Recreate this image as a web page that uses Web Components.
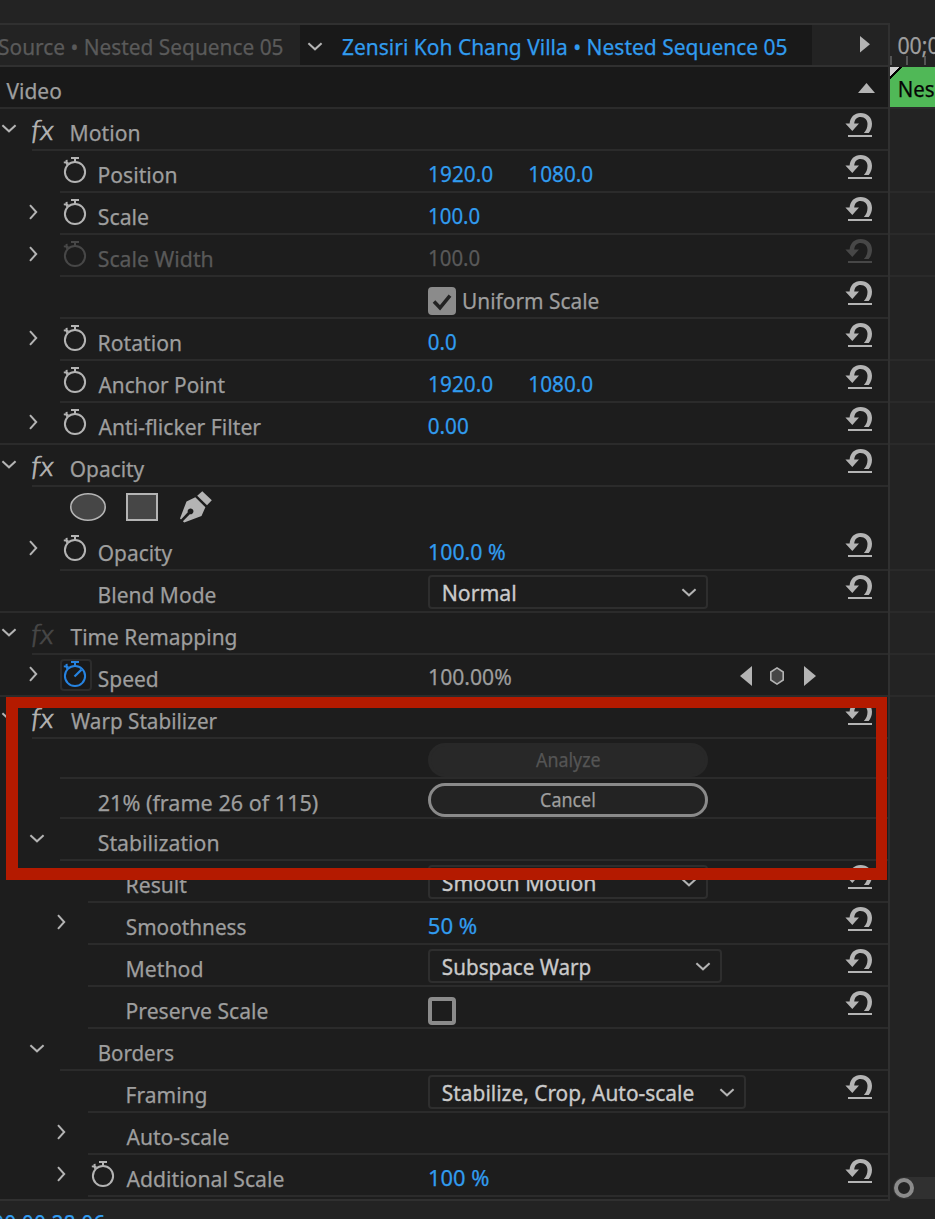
<!DOCTYPE html>
<html lang="en">
<head>
<meta charset="utf-8">
<title>Effect Controls</title>
<style>
html,body{margin:0;height:1219px;background:#232323;overflow:hidden}
body{font:22px/30px "Noto Sans","Open Sans",sans-serif;color:#9e9e9e;-webkit-text-stroke:.25px}
</style>
</head>
<body>
<effect-app></effect-app>
<script>
const define = (name, css, html, init) => {
  const t = document.createElement('template');
  t.innerHTML = `<style>*{box-sizing:border-box}svg{display:block;overflow:visible}${css}</style>${html}`;
  customElements.define(name, class extends HTMLElement {
    connectedCallback() {
      if (this.shadowRoot) return;
      this.attachShadow({ mode: 'open' }).appendChild(t.content.cloneNode(true));
      if (init) init(this, this.shadowRoot);
    }
  });
};

/* Text condensed to a given ink width: "ink" is the drawn width, "dx" its left offset. */
const ctx = document.createElement('canvas').getContext('2d');
define('fit-text', `:host{display:block;white-space:pre;flex:none;line-height:30px}
  span{display:inline-block;transform-origin:0 0}`, `<span><slot></slot></span>`, (el, root) => {
  const s = getComputedStyle(el), span = root.querySelector('span');
  ctx.font = `${s.fontStyle} ${s.fontWeight} ${s.fontSize} ${s.fontFamily}`;
  const m = ctx.measureText(el.textContent);
  const w = parseFloat(el.getAttribute('ink'));
  const k = w / (m.actualBoundingBoxLeft + m.actualBoundingBoxRight);
  const dx = parseFloat(el.getAttribute('dx') || 0) + m.actualBoundingBoxLeft * k;
  el.style.width = w + 'px';
  span.style.transform = `translateX(${dx}px) scaleX(${k})`;
});

const icons = {
  down: [16, 10, '<path d="M1.4 1.2 8 7.3 14.6 1.2" fill="none" stroke="currentColor" stroke-width="2"/>'],
  right: [10, 16, '<path d="M1 1.2 7.2 8 1 14.8" fill="none" stroke="currentColor" stroke-width="2"/>'],
  watch: [26, 28, '<circle cx="13" cy="16" r="10.1" fill="none" stroke="currentColor" stroke-width="2"/><path d="M9 1h8v2h-3v3h-2V3H9z" fill="currentColor"/><path d="M3.600 4 5.6 3.800 5.600 6 7 6.800 4.400 9.200 3.800 7.600 1.800 7.200 1.800 5.400 3.600 5.600z" fill="currentColor"/>'],
  watchon: [26, 28, '<circle cx="13" cy="16" r="10.1" fill="none" stroke="currentColor" stroke-width="2"/><path d="M9 1h8v2h-3v3h-2V3H9z" fill="currentColor"/><path d="M3.600 4 5.6 3.800 5.600 6 7 6.800 4.400 9.200 3.800 7.600 1.800 7.200 1.800 5.400 3.600 5.600z" fill="currentColor"/><path d="M12.5 16.5 19.5 9.6" stroke="currentColor" stroke-width="2.2"/>'],
  reset: [28, 26, '<path d="M4.600 10.400C5.200 4.200 9.300 0 15.600 0 22.200 0 27 4.300 27 10.800c0 3.700-1.200 6.700-3.300 9.200h-4.800c2.300-2.500 3.600-5.400 3.600-9 0-4-2.700-6.900-6.900-6.900-3.800 0-5.900 2.400-6.400 6.300H14L7.300 18 .4 10.400z" fill="currentColor"/><path d="M3 22h24v2H3z" fill="currentColor"/>'],
  play: [12, 20, '<path d="M0 0 12 10 0 20z" fill="currentColor"/>'],
  back: [12, 20, '<path d="M12 0 0 10 12 20z" fill="currentColor"/>'],
  key: [14, 18, '<path d="M7 .9 13.2 5v8L7 17.100.8 13V5z" fill="#464646" stroke="currentColor" stroke-width="1.6"/>'],
  menu: [10, 17, '<path d="M0 0 10 8.300 0 16.600z" fill="currentColor"/>'],
  up: [17, 10, '<path d="M0 10 8.500 0 17 10z" fill="currentColor"/>'],
  ellipse: [36, 28, '<ellipse cx="18" cy="14" rx="17.200" ry="13.200" fill="#464646" stroke="currentColor" stroke-width="1.600"/>'],
  rect: [32, 28, '<path d="M1 1h30v26H1z" fill="#464646" stroke="currentColor" stroke-width="2"/>'],
  pen: [32, 32, '<path d="M22.300.2 31.800 9.300 27 14.200 17.200 4.800z" fill="currentColor"/><path d="M15.300 6.300 25.400 16.200 21.500 25 4.200 31.400 2.900 30.300 9.800 23.200A2.900 2.900 0 1 0 7.800 21.300L1 28.600 0 27.500 6.500 10.400z" fill="currentColor"/>'],
  check: [28, 28, '<path d="M6 14.500 12 20.800 22 8.700" fill="none" stroke="#222" stroke-width="3.600"/>']
};
define('ui-icon', `:host{display:block;flex:none;color:#b4b4b4}`, `<svg></svg>`, (el, root) => {
  const [w, h, body] = icons[el.getAttribute('name')], svg = root.querySelector('svg');
  svg.setAttribute('width', w); svg.setAttribute('height', h); svg.innerHTML = body;
});

define('tick-box', `:host{display:block;flex:none;box-sizing:border-box;width:28px;height:28px;margin-top:10px;border:4px solid #8b8b8b;border-radius:4px}
  :host([checked]){background:#8b8b8b}ui-icon{display:none;margin:-4px}:host([checked]) ui-icon{display:block}`,
  `<ui-icon name="check"></ui-icon>`);

define('drop-down', `:host{display:flex;box-sizing:border-box;justify-content:space-between;height:34px;margin-top:4px;border:2px solid #2e2e2e;border-radius:4px;padding:0 9px 0 12px;color:#cacaca;-webkit-text-stroke:.35px}
  ui-icon{margin-top:11px}`, `<slot></slot><ui-icon name="down"></ui-icon>`);

define('pill-button', `:host{display:flex;box-sizing:border-box;justify-content:center;width:280px;height:34px;margin-top:4px;border:3px solid #8a8a8a;border-radius:17px;font-size:19px;background:#232323;color:#9e9e9e}
  :host([disabled]){background:#282828;border-color:#282828;color:#555}
  div{margin-top:-1px}`, `<div><slot></slot></div>`);

/* One property line: twirl arrow, stopwatch or fx badge, name, value and reset button. */
define('prop-row', `
  :host{display:flex;height:var(--h,42px);width:888px;align-items:flex-start;
    background:linear-gradient(#2b2b2b,#2b2b2b) var(--inset) 100%/100% 2px no-repeat}
  .name{display:flex;width:428px;flex:none;align-items:flex-start}
  .twirl{width:32px;flex:none}.twirl ui-icon{margin-left:1px}
  .badge{width:38px;flex:none}
  .badge.watch ui-icon{margin:5px 0 0 2px}
  .badge.watchon{width:32px;height:32px;margin:4px 6px 0 0;border:2px solid #2c2c2c;border-radius:4px;background:#191919}
  .badge.watchon ui-icon{margin:-1px 0 0 0;color:#2683e0}
  .fx{font:italic 300 27px/30px Lato,"Noto Sans",sans-serif;-webkit-text-stroke:.7px;color:#b4b4b4;margin-top:6px}
  .dim{color:#474747!important}
  .label{margin-top:8px}
  .value{display:flex;width:417px;flex:none;align-items:flex-start;color:#319cef}
  .reset{margin-top:4px}`,
  `<div class="name"><div class="twirl"></div><div class="badge"></div><div class="label"><slot name="label"></slot></div></div>
   <div class="value"><slot></slot></div>`, (el, root) => {
  const a = n => el.getAttribute(n), $ = s => root.querySelector(s), lv = +a('level') || 0;
  el.style.setProperty('--inset', (a('line') ?? 32 + 28 * lv) + 'px');
  if (a('h')) el.style.setProperty('--h', a('h') + 'px');
  $('.name').style.paddingLeft = 28 * lv + 'px';
  const t = a('twirl'), dim = el.hasAttribute('dim');
  if (t) $('.twirl').innerHTML = `<ui-icon name="${t}" style="margin-top:${t === 'down' ? 15 : 11}px"></ui-icon>`;
  const b = a('badge'), bd = $('.badge');
  if (b === 'fx') bd.innerHTML = `<div class="fx${dim ? ' dim' : ''}"><fit-text ink="21.5" dx=".3">fx</fit-text></div>`;
  else if (b) { bd.classList.add(b); bd.innerHTML = `<ui-icon name="${b}"${dim ? ' class="dim"' : ''}></ui-icon>`; }
  if (dim && b !== 'fx') { $('.label').style.color = '#595959'; $('.value').style.color = '#595959'; }
  if (el.hasAttribute('reset')) $('.value').insertAdjacentHTML('afterend', `<ui-icon name="reset" class="reset${dim ? ' dim' : ''}"></ui-icon>`);
});

define('time-ruler', `:host{display:flex;flex-direction:column;width:45px;overflow:hidden;background:#232323}
  .scale{height:42px;font-size:23.500px;padding:5px 0 0 8px;flex:none;background:
    linear-gradient(#555,#555) 0 31px/2px 9px no-repeat,linear-gradient(#555,#555) 16px 31px/2px 9px no-repeat,linear-gradient(#555,#555) 34px 31px/2px 9px no-repeat}
  .clip{height:40px;flex:none;background:linear-gradient(135deg,#d0d0d0 6.500px,#000 6.500px 8.500px,#50b857 8.500px);color:#050505;padding:6px 0 0 9px}
  .lane{border-bottom:2px solid #2a2a2a;flex:none}
  .grow{flex:1}.bar{height:22px;background:#303030;border-radius:11px 0 0 11px;margin:0 0 2px 3px;padding:1px}
  .bar i{display:block;width:20px;height:20px;border:4px solid #8b8b8b;border-radius:50%;background:#232323}`,
  `<div class="scale"><fit-text ink="41" dx=".3">00;0</fit-text></div><div class="clip"><fit-text ink="34.5" dx=".5">Nes</fit-text></div>
   <div class="lanes"></div><div class="grow"></div><div class="bar"><i></i></div>`, (el, root) => {
  root.querySelector('.lanes').innerHTML = [2, 84, 42, 42, 84, 42, 42, 126, 42, 42, 42].map(h => `<div class="lane" style="height:${h}px"></div>`).join('');
});

define('tab-bar', `:host{display:flex;box-sizing:border-box;height:42px;border-bottom:2px solid #303030;background:#232323;width:888px}
  .off{width:300px;color:#5a5a5a;padding-top:6px}
  .on{width:512px;background:#191919;display:flex;color:#319cef;padding:6px 0 0 7px}
  .on ui-icon{margin:11px 19px 0 0}.menu{margin:11px 0 0 48px}`,
  `<div class="off"><fit-text ink="284" dx="-1">Source • Nested Sequence 05</fit-text></div>
   <div class="on"><ui-icon name="down"></ui-icon><fit-text ink="445">Zensiri Koh Chang Villa • Nested Sequence 05</fit-text></div>
   <ui-icon class="menu" name="menu"></ui-icon>`);

define('section-head', `:host{display:flex;box-sizing:border-box;justify-content:space-between;height:42px;border-bottom:2px solid #2b2b2b;background:#191919;padding:8px 13px 0 6px}
  ui-icon{margin-top:8px}`, `<slot></slot><ui-icon name="up"></ui-icon>`);

const L = (dx, ink, s) => `<fit-text slot="label" dx="${dx}" ink="${ink}">${s}</fit-text>`;
const V = (dx, ink, s, st = '') => `<fit-text style="margin-top:7px;${st}" dx="${dx}" ink="${ink}">${s}</fit-text>`;
const D = (w, ink, s, dx = .8) => `<drop-down style="width:${w}px"><fit-text dx="${dx}" ink="${ink - 1}">${s}</fit-text></drop-down>`;
const XY = V(1, 63.7, '1920.0') + V(1.2, 63.5, '1080.0', 'margin-left:36.300px');

define('effect-app', `
  :host{display:flex;flex-direction:column;width:935px;height:1219px;position:relative;background:#232323;overflow:hidden}
  .main{display:flex;margin-top:23px;height:1178px}
  .panel{width:890px;flex:none;border:solid #303030;border-width:2px 2px 2px 0;background:#1d1d1d}
  time-ruler{padding-top:2px;box-sizing:border-box}
  .masks{display:flex;padding:6px 0 0 70px;height:42px}.masks ui-icon+ui-icon{margin-left:20px}.masks ui-icon:last-child{margin:-2px 0 0 22px}
  .keys{display:flex;margin-left:229px;padding-top:11px}.keys ui-icon+ui-icon{margin-left:18px}.keys ui-icon:nth-child(2){margin-top:1px}.keys ui-icon:last-child{margin-left:20px}
  .foot{color:#319cef;font-size:23.500px;margin-top:7px;height:11px;overflow:hidden}
  .callout{position:absolute;left:6px;top:697px;width:881px;height:183px;border:solid #b41a00;border-width:11px 11px 12px 12px}`,
  `<div class="main"><div class="panel">
    <tab-bar></tab-bar>
    <section-head><fit-text ink="55" dx=".5">Video</fit-text></section-head>
    <prop-row twirl="down" badge="fx" reset>${L(1.5, 67.5, 'Motion')}</prop-row>
    <prop-row level="1" badge="watch" reset>${L(1.5, 76.5, 'Position')}${XY}</prop-row>
    <prop-row level="1" twirl="right" badge="watch" reset>${L(.7, 50, 'Scale')}${V(1, 50.7, '100.0')}</prop-row>
    <prop-row level="1" twirl="right" badge="watch" dim reset>${L(.7, 113.5, 'Scale Width')}${V(1, 50.7, '100.0')}</prop-row>
    <prop-row level="1" reset><tick-box checked></tick-box>${V(7, 136, 'Uniform Scale', 'margin-top:8px;color:#9e9e9e')}</prop-row>
    <prop-row level="1" twirl="right" badge="watch" reset>${L(1.5, 81, 'Rotation')}${V(.7, 27.5, '0.0')}</prop-row>
    <prop-row level="1" badge="watch" reset>${L(.5, 126.5, 'Anchor Point')}${XY}</prop-row>
    <prop-row level="1" twirl="right" badge="watch" line="0" reset>${L(.5, 162.5, 'Anti-flicker Filter')}${V(.7, 39.5, '0.00')}</prop-row>
    <prop-row twirl="down" badge="fx" reset>${L(.7, 74.3, 'Opacity')}</prop-row>
    <div class="masks"><ui-icon name="ellipse"></ui-icon><ui-icon name="rect"></ui-icon><ui-icon name="pen"></ui-icon></div>
    <prop-row level="1" twirl="right" badge="watch" reset>${L(.7, 74.3, 'Opacity')}${V(1, 76.5, '100.0 %')}</prop-row>
    <prop-row level="1" line="0" reset>${L(1.5, 116.5, 'Blend Mode')}${D(280, 72.5, 'Normal', 1.6)}</prop-row>
    <prop-row twirl="down" badge="fx" dim>${L(.5, 165.5, 'Time Remapping')}</prop-row>
    <prop-row level="1" twirl="right" badge="watchon" line="0">${L(.7, 58.5, 'Speed')}${V(1, 82.5, '100.00%', 'margin-top:6px;color:#9e9e9e')}<div class="keys"><ui-icon name="back"></ui-icon><ui-icon name="key"></ui-icon><ui-icon name="play"></ui-icon></div></prop-row>
    <prop-row twirl="down" badge="fx" reset>${L(1, 146, 'Warp Stabilizer')}</prop-row>
    <prop-row level="1" h="40"><pill-button disabled><fit-text ink="64">Analyze</fit-text></pill-button></prop-row>
    <prop-row level="1" h="40">${L(.7, 219, '21% (frame 26 of 115)')}<pill-button><fit-text ink="54">Cancel</fit-text></pill-button></prop-row>
    <prop-row level="1" twirl="down">${L(.7, 119.3, 'Stabilization')}</prop-row>
    <prop-row level="2" reset>${L(1.5, 59.5, 'Result')}${D(280, 153, 'Smooth Motion')}</prop-row>
    <prop-row level="2" twirl="right" reset>${L(.7, 119.3, 'Smoothness')}${V(.7, 48.3, '50 %')}</prop-row>
    <prop-row level="2" reset>${L(1.5, 74.5, 'Method')}${D(294, 149, 'Subspace Warp')}</prop-row>
    <prop-row level="2" reset>${L(1.5, 140.5, 'Preserve Scale')}<tick-box></tick-box></prop-row>
    <prop-row level="1" twirl="down">${L(1.5, 74, 'Borders')}</prop-row>
    <prop-row level="2" reset>${L(1.5, 78.5, 'Framing')}${D(318, 252, 'Stabilize, Crop, Auto-scale')}</prop-row>
    <prop-row level="2" twirl="right">${L(.5, 102.5, 'Auto-scale')}</prop-row>
    <prop-row level="2" twirl="right" badge="watch" reset>${L(.5, 157.5, 'Additional Scale')}${V(1, 60.2, '100 %')}</prop-row>
  </div><time-ruler></time-ruler></div>
  <div class="foot"><fit-text ink="112" dx="-7">00;00;28;06</fit-text></div>
  <div class="callout"></div>`);
</script>
</body>
</html>
